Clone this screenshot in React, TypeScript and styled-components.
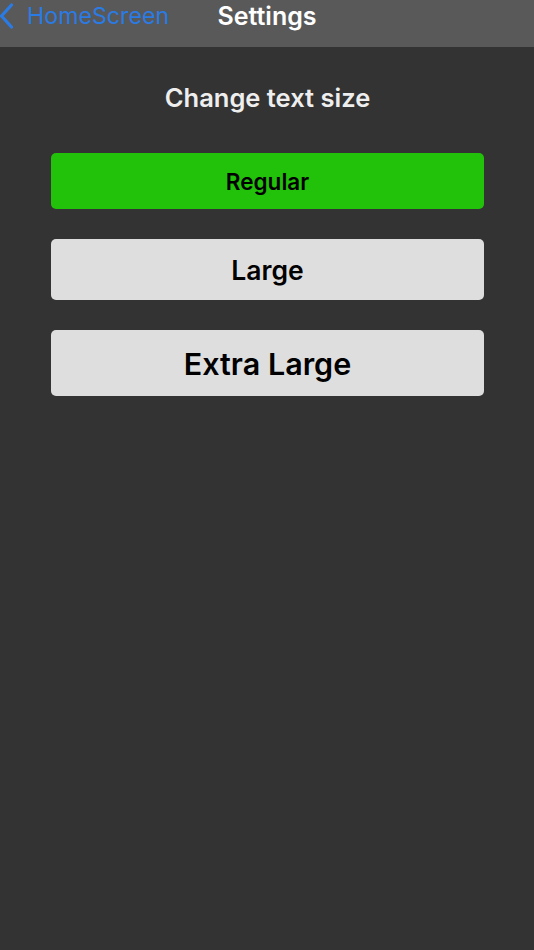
import React, { useState } from 'react'
import styled, { createGlobalStyle } from 'styled-components'

const GlobalStyle = createGlobalStyle`
  html, body {
    margin: 0;
    padding: 0;
    background: #333333;
  }
  body {
    font-family: Inter, "Noto Sans", "Liberation Sans", sans-serif;
    -webkit-font-smoothing: antialiased;
  }
`

const Screen = styled.div`
  display: flex;
  flex-direction: column;
  width: 100%;
  min-height: 950px;
  background: #333333;
`

const NavBar = styled.div`
  display: grid;
  grid-template-columns: 1fr auto 1fr;
  align-items: center;
  height: 47px;
  padding-bottom: 15px;
  box-sizing: border-box;
  background: #595959;
`

const BackButton = styled.button`
  display: flex;
  align-items: center;
  gap: 13px;
  padding: 0;
  margin: 0;
  border: none;
  background: none;
  color: #2a7be4;
  font-family: inherit;
  font-size: 23.2px;
  font-weight: 400;
  cursor: pointer;

  svg {
    flex-shrink: 0;
  }
`

const NavTitle = styled.div`
  color: #ffffff;
  font-size: 25px;
  font-weight: 600;
`

const Content = styled.div`
  display: flex;
  flex-direction: column;
  align-items: center;
  padding: 37px 50px 0 51px;
`

const Heading = styled.h2`
  margin: 0 0 41px;
  color: #eeeeee;
  font-size: 25.5px;
  font-weight: 600;
  line-height: 28px;
`

const Options = styled.div`
  display: flex;
  flex-direction: column;
  gap: 30px;
  width: 100%;
`

const SizeButton = styled.button<{ active?: boolean; height: number; size: number }>`
  width: 100%;
  height: ${({ height }) => height}px;
  margin: 0;
  padding: 0;
  border: none;
  border-radius: 5px;
  background: ${({ active }) => (active ? '#22c10a' : '#dedede')};
  color: #000000;
  font-family: inherit;
  font-size: ${({ size }) => size}px;
  font-weight: 600;
  cursor: pointer;
`

const sizes = [
  { label: 'Regular', height: 56, size: 22.5 },
  { label: 'Large', height: 61, size: 26.5 },
  { label: 'Extra Large', height: 66, size: 30.5 },
]

const App = () => {
  const [selected, setSelected] = useState('Regular')

  return (
    <>
      <GlobalStyle />
      <Screen>
        <NavBar>
          <BackButton>
            <svg width="14" height="26" viewBox="0 0 14 26">
              <path d="M11.5 2 L1.5 13 L11.5 24" fill="none" stroke="#2a7be4" strokeWidth="3.2" strokeLinecap="round" strokeLinejoin="round" />
            </svg>
            HomeScreen
          </BackButton>
          <NavTitle>Settings</NavTitle>
          <div />
        </NavBar>
        <Content>
          <Heading>Change text size</Heading>
          <Options>
            {sizes.map((s) => (
              <SizeButton
                key={s.label}
                active={selected === s.label}
                height={s.height}
                size={s.size}
                onClick={() => setSelected(s.label)}
              >
                {s.label}
              </SizeButton>
            ))}
          </Options>
        </Content>
      </Screen>
    </>
  )
}

export default App
